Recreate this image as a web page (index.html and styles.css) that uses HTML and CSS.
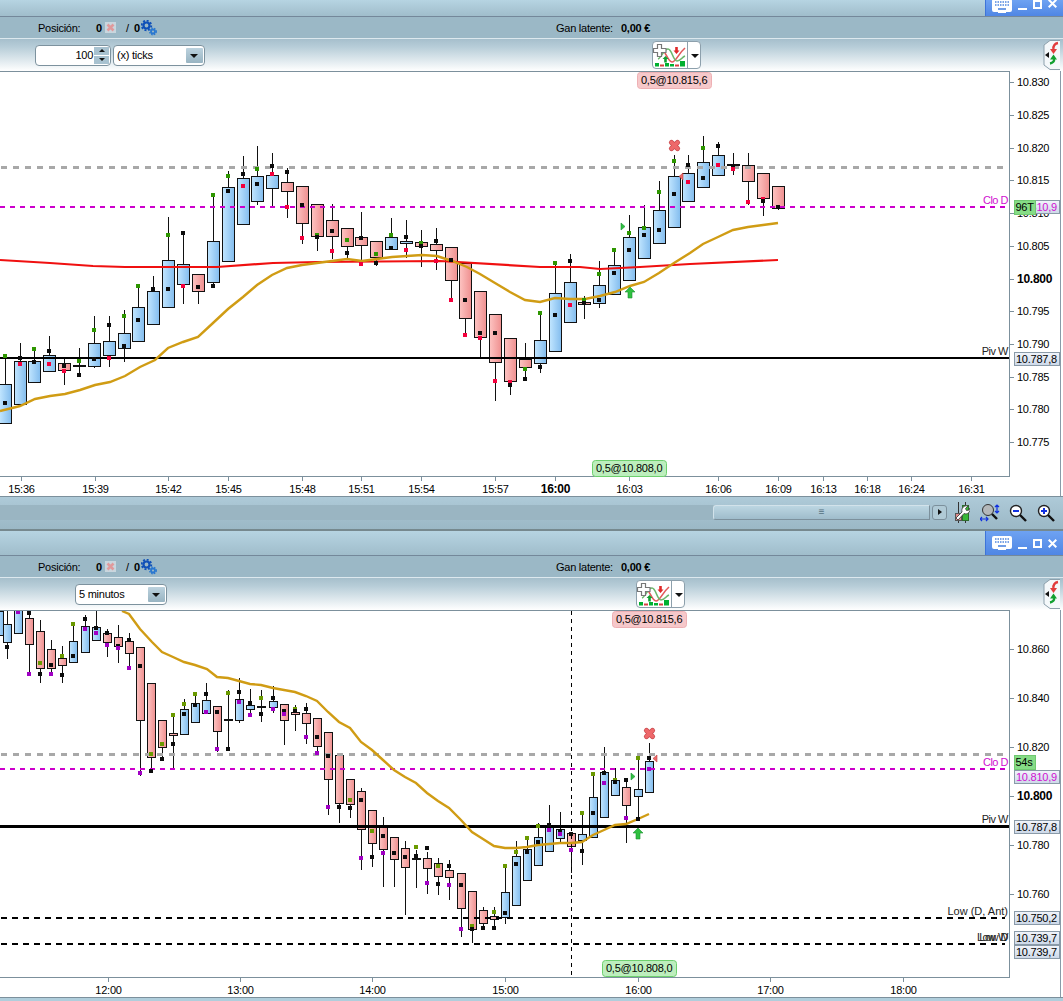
FILE: index.html
```html
<!DOCTYPE html>
<html lang="es">
<head>
<meta charset="utf-8">
<title>Gráficos</title>
<link rel="stylesheet" href="styles.css">
</head>
<body>
<svg class="defs" width="0" height="0" aria-hidden="true">
  <defs>
    <linearGradient id="gb" x1="0" x2="1" y1="0" y2="0"><stop offset="0" stop-color="#c2e6ff"/><stop offset="1" stop-color="#82bcee"/></linearGradient>
    <linearGradient id="gr" x1="0" x2="1" y1="0" y2="0"><stop offset="0" stop-color="#fdc4c2"/><stop offset="1" stop-color="#ef8f8f"/></linearGradient>
    <linearGradient id="gbox" x1="0" x2="0" y1="0" y2="1"><stop offset="0" stop-color="#f2f5fb"/><stop offset="1" stop-color="#ccd8e8"/></linearGradient>
    <symbol id="i-keyboard" viewBox="0 0 20 14">
      <path d="M2 0h16a2 2 0 0 1 2 2v9a2 2 0 0 1-2 2h-4v1H6v-1H2a2 2 0 0 1-2-2V2a2 2 0 0 1 2-2z" fill="#fff"/>
      <path d="M3 3h14M3 6h14" stroke="#4f86e0" stroke-width="1.6" stroke-dasharray="1.5 1"/>
      <path d="M6 10h8" stroke="#4f86e0" stroke-width="1.6"/>
    </symbol>
    <symbol id="i-close" viewBox="0 0 9 9">
      <path d="M.7.7l7.600 7.600M8.300.7L.7 8.300" stroke="#fff" stroke-width="2"/>
    </symbol>
    <symbol id="i-gears" viewBox="0 0 16 16">
      <circle cx="5.5" cy="5.5" r="3" fill="none" stroke="#0f50b8" stroke-width="2.200"/>
      <circle cx="5.5" cy="5.5" r="4.800" fill="none" stroke="#0f50b8" stroke-width="1.800" stroke-dasharray="2 1.700"/>
      <circle cx="12" cy="11.5" r="2" fill="none" stroke="#2a78d0" stroke-width="1.800"/>
      <circle cx="12" cy="11.5" r="3.300" fill="none" stroke="#2a78d0" stroke-width="1.300" stroke-dasharray="1.500 1.200"/>
    </symbol>
    <symbol id="i-cross" viewBox="0 0 11 11">
      <rect width="11" height="11" fill="#c9d6de"/>
      <path d="M2.5 2.5l6 6M8.5 2.5l-6 6" stroke="#e09a9c" stroke-width="2.6"/>
    </symbol>
    <symbol id="i-indic" viewBox="0 0 34 27">
      <path d="M10 9c3 1 5 11 9 11s6-8 13-14" fill="none" stroke="#e25a5a" stroke-width="1.600"/>
      <path d="M5 17c3-1 6-10 10-10s5 12 9 12 5-4 8-5" fill="none" stroke="#6cb86c" stroke-width="1.600"/>
      <path d="M4.500 2.500h4v4H13v4H8.500v4h-4v-4h-4v-4h4z" fill="#fff" stroke="#777" stroke-width="1.200"/>
      <path d="M12.500 14l-3 3h1.700v3.500h2.600V17h1.700z" fill="#10a030"/>
      <path d="M23.500 12l3-3.500h-1.700V5h-2.600v3.500h-1.700z" fill="#e02828"/>
      <path d="M2 21h4v3.500H2zM12 21h4v3.500h-4zM27 19h5v5.500h-5z" fill="#00b030"/>
      <path d="M7 22.500h4v2H7zM22 22.500h4v2h-4z" fill="#d84040"/>
      <path d="M17 22h4v2.500h-4z" fill="#00b030"/>
    </symbol>
    <symbol id="i-side" viewBox="0 0 17 30">
      <path d="M17 .5H7L1 5v20l6 4.500h10" fill="#f4f8fa" stroke="#8da0ac"/>
      <path d="M2 15l4-3v6z" fill="#111"/>
      <path d="M15 3c-3 .5-5 3-4.500 6" fill="none" stroke="#e23c3c" stroke-width="2.400"/>
      <path d="M10.500 14l3.500-5H7z" fill="#e23c3c"/>
      <path d="M11 19c.5 2-1 4-4 4.500" fill="none" stroke="#12a030" stroke-width="2.400"/>
      <path d="M10.500 14.500L7 19.500h7z" fill="#12a030"/>
    </symbol>
  </defs>
</svg>

<section class="pane">
  <div class="title title-first">
    <div class="winbtns">
      <svg class="kb" width="20" height="14"><use href="#i-keyboard"/></svg>
      <span class="w-min"></span><span class="w-max"></span>
      <svg class="w-close" width="9" height="9"><use href="#i-close"/></svg>
    </div>
  </div>
  <div class="status">
    <div class="st-left">
      <span class="st-label">Posición:</span><b class="st-zero">0</b>
      <svg class="st-x" width="11" height="11"><use href="#i-cross"/></svg>
      <span class="st-slash">/</span><b class="st-zero2">0</b>
      <svg width="16" height="16"><use href="#i-gears"/></svg>
    </div>
    <span class="st-gan">Gan latente:</span><b>0,00 €</b>
  </div>
  <div class="toolbar">
    <div class="tb-left tb-left-a">
      <div class="spin">100<span class="spin-btns"><i class="up"></i><i class="down"></i></span></div>
      <div class="sel">(x) ticks<i class="sel-btn"></i></div>
    </div>
    <div class="indic indic-a">
      <svg width="34" height="27"><use href="#i-indic"/></svg><span class="indic-arrow"></span>
    </div>
    <svg class="side" width="17" height="30"><use href="#i-side"/></svg>
  </div>
  <svg id="chart1" class="chart chart-a" viewBox="0 71 1063 425"></svg>
</section>

<div class="scrollrow">
  <div class="track"><div class="thumb">≡</div></div>
  <div class="sbtn"></div>
  <svg class="tool tool-w" width="16" height="21" viewBox="0 0 16 21">
    <path d="M4.500 0v21M11.500 0v21" stroke="#333"/>
    <rect x="1.500" y="11.500" width="6" height="7" fill="#e08a8a" stroke="#555"/>
    <rect x="8.500" y="3.500" width="6" height="15" fill="#38b838" stroke="#2c6c2c"/>
    <path d="M2 16l6-6c-1-4 2-7 6-6l-2.500 2.500 1 2 2.500-.5 1-2c1 4-3 7-6 5.500l-6 6.500z" fill="#fff" stroke="#444" stroke-width=".9"/>
  </svg>
  <svg class="tool tool-m" width="20" height="18" viewBox="0 0 20 18">
    <circle cx="8" cy="6" r="5.500" fill="#b4b8ba" stroke="#333"/>
    <path d="M12 10l5 5" stroke="#111" stroke-width="2.400"/>
    <path d="M17 1v8M15 3l2-2 2 2M15 7l2 2 2-2M0 15h8M2 13l-2 2 2 2M6 13l2 2-2 2" fill="none" stroke="#1030e0" stroke-width="1.200"/>
  </svg>
  <svg class="tool tool-o" width="18" height="18" viewBox="0 0 18 18">
    <circle cx="7" cy="7" r="5.500" fill="#fff" stroke="#222" stroke-width="1.400"/>
    <path d="M11 11l6 6" stroke="#111" stroke-width="2.400"/>
    <path d="M4 7h6" stroke="#1030e0" stroke-width="2"/>
  </svg>
  <svg class="tool tool-i" width="18" height="18" viewBox="0 0 18 18">
    <circle cx="7" cy="7" r="5.500" fill="#fff" stroke="#222" stroke-width="1.400"/>
    <path d="M11 11l6 6" stroke="#111" stroke-width="2.400"/>
    <path d="M4 7h6M7 4v6" stroke="#1030e0" stroke-width="2"/>
  </svg>
</div>

<section class="pane">
  <div class="title title-second">
    <div class="winbtns winbtns-b">
      <svg class="kb" width="20" height="14"><use href="#i-keyboard"/></svg>
      <span class="w-min"></span><span class="w-max"></span>
      <svg class="w-close" width="9" height="9"><use href="#i-close"/></svg>
    </div>
  </div>
  <div class="status">
    <div class="st-left">
      <span class="st-label">Posición:</span><b class="st-zero">0</b>
      <svg class="st-x" width="11" height="11"><use href="#i-cross"/></svg>
      <span class="st-slash">/</span><b class="st-zero2">0</b>
      <svg width="16" height="16"><use href="#i-gears"/></svg>
    </div>
    <span class="st-gan">Gan latente:</span><b>0,00 €</b>
  </div>
  <div class="toolbar">
    <div class="tb-left tb-left-b">
      <div class="sel">5 minutos<i class="sel-btn"></i></div>
    </div>
    <div class="indic indic-b">
      <svg width="34" height="27"><use href="#i-indic"/></svg><span class="indic-arrow"></span>
    </div>
    <svg class="side" width="17" height="30"><use href="#i-side"/></svg>
  </div>
  <svg id="chart2" class="chart chart-b" viewBox="0 610 1063 387"></svg>
</section>
<div class="footer"></div>
<script src="script.js"></script>
</body>
</html>
```
FILE: styles.css
```css
* { box-sizing: border-box; }
html, body { margin: 0; padding: 0; }
body {
  width: 1063px;
  height: 1001px;
  overflow: hidden;
  background: #fff;
  font: 11px "Liberation Sans", Arial, sans-serif;
  letter-spacing: -0.25px;
  color: #000;
}
.defs { position: absolute; }
.pane { display: block; }

.title {
  display: flex;
  justify-content: flex-end;
  border-bottom: 1px solid #74889a;
  background: linear-gradient(#b6d4e2, #a0bdcb);
}
.title-first { height: 17px; }
.title-second { height: 25px; }
.winbtns {
  width: 78px;
  display: flex;
  align-items: center;
  gap: 6px;
  padding-left: 6px;
  background: linear-gradient(#6ea2f2, #4f86e4);
  border-left: 1px solid #3e74d8;
  overflow: hidden;
}
.title-first .winbtns { align-items: flex-start; height: 16px; }
.title-first .kb { margin-top: -1px; }
.winbtns-b { height: 24px; }
.w-min { width: 9px; height: 2px; background: #fff; margin-top: 9px; }
.w-max { width: 9px; height: 9px; border: 2px solid #fff; }
.title-first .w-max { margin-top: 0; }
.title-first .w-min { margin-top: 8px; }
.title-first .w-close { margin-top: -1px; }

.status {
  height: 22px;
  display: flex;
  align-items: center;
  background: #9bb8c6;
  border-bottom: 1px solid #dce8ee;
}
.st-left { width: 556px; display: flex; align-items: center; padding-left: 38px; }
.st-label { width: 58px; }
.st-zero { width: 9px; }
.st-x { margin-right: 10px; }
.st-slash { width: 8px; }
.st-zero2 { width: 7px; }
.st-gan { width: 65px; }

.toolbar {
  height: 32px;
  display: flex;
  align-items: center;
  background: linear-gradient(#a6bfcc, #b7cdd8 25%, #fff);
}
.tb-left { display: flex; gap: 2px; }
.tb-left-a { padding-left: 35px; width: 652px; }
.tb-left-b { padding-left: 75px; width: 636px; }
.spin, .sel {
  height: 21px;
  background: #fff;
  border: 1px solid #7d929e;
  border-radius: 4px;
  display: flex;
  align-items: center;
}
.spin { width: 76px; justify-content: flex-end; padding-right: 1px; }
.spin-btns { display: flex; flex-direction: column; gap: 1px; margin-left: 1px; }
.spin-btns i {
  width: 15px;
  height: 8px;
  background: #a8c2d0;
  position: relative;
  display: block;
}
.spin-btns i::after {
  content: "";
  position: absolute;
  left: 5px;
  top: 2px;
  border: 3px solid transparent;
  border-top: 0;
  border-bottom: 3px solid #111;
}
.spin-btns i.down::after { border-bottom: 0; border-top: 3px solid #111; }
.sel { width: 92px; padding-left: 3px; justify-content: space-between; padding-right: 1px; }
.sel-btn {
  width: 17px;
  height: 15px;
  background: linear-gradient(#bcd2de, #98b4c2);
  border-radius: 1px;
  position: relative;
}
.sel-btn::after {
  content: "";
  position: absolute;
  left: 4px;
  top: 6px;
  border: 4px solid transparent;
  border-bottom: 0;
  border-top: 4px solid #111;
}
.indic {
  width: 49px;
  height: 28px;
  display: flex;
  align-items: center;
  background: #fff;
  border: 1px solid #8da0ac;
  border-radius: 4px;
}
.indic-arrow {
  flex: 1;
  height: 100%;
  border-left: 1px solid #8da0ac;
  position: relative;
}
.indic-arrow::after {
  content: "";
  position: absolute;
  left: 3px;
  top: 12px;
  border: 4px solid transparent;
  border-bottom: 0;
  border-top: 4px solid #111;
}
.side { margin-left: auto; margin-right: 3px; }

.chart { display: block; width: 1063px; }
.chart-a { height: 425px; }
.chart-b { height: 387px; }
.edge { stroke: #8a9aa8; }
.wick, .tick { stroke: #111; shape-rendering: crispEdges; }
.tick { stroke: #7c909c; }
.body { stroke: #111; shape-rendering: crispEdges; }
.body.b { fill: url(#gb); }
.body.r { fill: url(#gr); }
.doji { stroke: #111; stroke-width: 2; shape-rendering: crispEdges; }
.m { shape-rendering: crispEdges; }
.m.g { fill: #2e9600; }
.m.k { fill: #0c0c0c; }
.m.r { fill: #f4003c; }
.chart-b .m.g { fill: #6a9a00; }
.chart-b .m.r { fill: #a000c4; }
.l-grey { stroke: #a8a8a8; stroke-width: 3; stroke-dasharray: 6 6; shape-rendering: crispEdges; }
.l-mag { stroke: #cc00cc; stroke-width: 2; stroke-dasharray: 5 5; shape-rendering: crispEdges; }
.l-black { stroke: #000; stroke-width: 2; shape-rendering: crispEdges; }
.l-thick { stroke-width: 3; }
.l-dash { stroke: #000; stroke-width: 2; stroke-dasharray: 6 5; shape-rendering: crispEdges; }
.l-cross { stroke: #000; stroke-dasharray: 4 4; shape-rendering: crispEdges; }
.l-red { fill: none; stroke: #f01010; stroke-width: 2.200; }
.l-gold { fill: none; stroke: #d09c14; stroke-width: 2.400; }
.ax { font: 11px "Liberation Sans", Arial, sans-serif; letter-spacing: -0.25px; fill: #000; }
.ax.bold { font-weight: bold; font-size: 12px; }
.ax.mag { fill: #d010d0; }
.ax.lbl { fill: #222; text-anchor: end; letter-spacing: -0.5px; }
.ax.lbl.mag { fill: #d010d0; }
.ax.lbl.wide { letter-spacing: 0; }
.ax.mid { text-anchor: middle; }
.box { fill: url(#gbox); stroke: #8a9aa8; shape-rendering: crispEdges; }
.tag-g { fill: #86dc86; stroke: #70c870; shape-rendering: crispEdges; }
.badge-r { fill: #f6c8ca; stroke: #eeb0b4; }
.badge-g { fill: #bdeebd; stroke: #6ed06e; }
.xm-o { fill: none; stroke: #c84a4e; stroke-width: 5.200; stroke-linecap: round; }
.xm { fill: none; stroke: #ee686a; stroke-width: 3.800; stroke-linecap: round; }
.tri-g { fill: #30c040; stroke: #189030; stroke-width: .6; }
.tri-r { fill: #ec6868; stroke: #c04040; stroke-width: .6; }

.scrollrow {
  height: 35px;
  display: flex;
  align-items: center;
  background: linear-gradient(#aecad8, #9bb8c6);
  border-top: 1px solid #7c909c;
  border-bottom: 2px solid #76898f;
  padding-bottom: 3px;
  padding-top: 2px;
}
.track {
  width: 930px;
  height: 15px;
  background: #9ab5c2;
}
.thumb {
  margin-left: 713px;
  width: 217px;
  height: 15px;
  border: 1px solid #d2e2ea;
  border-right-color: #7c909c;
  border-bottom-color: #7c909c;
  border-radius: 3px 0 0 3px;
  background: linear-gradient(#bcd6e2, #9fbccb);
  text-align: center;
  font-size: 10px;
  line-height: 12px;
  color: #54707e;
}
.sbtn {
  width: 15px;
  height: 15px;
  margin-left: 2px;
  border: 1px solid #7c909c;
  border-radius: 3px;
  background: #b0cad6;
  position: relative;
}
.sbtn::after {
  content: "";
  position: absolute;
  left: 5px;
  top: 3px;
  border: 3.500px solid transparent;
  border-right: 0;
  border-left: 4px solid #111;
}
.tool { flex: none; }
.tool-w { margin-left: 7px; }
.tool-m { margin-left: 10px; }
.tool-o { margin-left: 9px; }
.tool-i { margin-left: 10px; }
.footer { height: 4px; border-top: 1px solid #7c909c; background: #b0cedc; }
```
FILE: script.js
```js
var NS = 'http://www.w3.org/2000/svg';
function el(p, t, a, txt) {
  var e = document.createElementNS(NS, t);
  for (var k in a) e.setAttribute(k, a[k]);
  if (txt !== undefined) e.textContent = txt;
  p.appendChild(e);
  return e;
}
var top1 = [
[5,358,424,384,423,'b','g356 k403'],[20,343,405,361,404,'b','k358 r364'],[34,350,382,361,382,'b','g349 k362'],
[49,336,371,355,371,'b','k351 r364'],[64,358,385,363,370,'r','k366 r371'],[79,348,377,366,366,'d','g361 k375'],
[94,316,368,343,366,'b','g330 k359'],[109,316,367,341,355,'b','k325 r358'],[124,310,362,333,348,'b','g316 k346'],
[138,287,341,307,341,'b','g286 k320'],[153,276,324,291,324,'b','k289'],[168,217,307,260,307,'b','g235 k289'],
[183,233,304,264,284,'b','k233 r286'],[198,274,304,274,291,'r','k287'],[213,195,286,241,282,'b','g195 k286'],
[228,171,261,187,261,'b','g176 k191'],[243,156,224,178,224,'b','k174 r186'],[257,146,205,176,201,'b','g169 k184'],
[272,153,207,175,188,'b','k166 r174'],[287,168,218,182,191,'r','k172 r207'],[302,186,244,186,223,'r','k205 r238'],
[317,204,251,204,236,'r','g235 k237'],[332,204,259,220,236,'r','k231 r251'],[347,228,258,228,246,'r','g240 k253'],
[361,212,266,237,245,'r','k238 r264'],[376,241,266,241,257,'r','g254 k263'],[391,218,249,237,249,'b','g235 k248'],
[406,220,258,241,243,'b','k237 r250'],[421,230,267,242,246,'r','g243 k246'],[436,228,270,244,250,'r','k241 r261'],
[451,247,300,247,280,'r','k260 r300'],[465,263,335,263,318,'r','k300 r335'],[480,291,357,291,337,'r','k333 r338'],
[495,314,401,314,362,'r','k333 r381'],[510,338,395,338,381,'r','r382 k385'],[525,343,378,359,367,'r','g369 k379'],
[540,313,373,340,363,'b','g313 k367'],[555,263,351,293,351,'b','g263 k315'],[570,254,322,282,322,'b','k261 r305'],
[584,296,319,302,304,'r','g300 k303'],[599,261,308,285,303,'b','g274 k300'],[614,248,294,265,294,'b','g250 k273'],
[629,215,280,237,280,'b','g233 k250'],[644,205,258,227,258,'b','g228 k235'],[659,181,243,210,243,'b','g192 k230'],
[674,155,227,176,227,'b','g161 k194'],[688,155,201,173,201,'b','k165 r182'],[703,136,187,162,187,'b','g148 k178'],
[718,142,175,155,175,'b','k146 r165'],[733,153,175,165,165,'d','k166 r169'],[748,153,205,165,181,'r','r202'],
[763,173,216,173,198,'r','r199 k201'],[778,186,210,186,208,'r','k207']
];
var bot = [
[-1,611,648,611,635,'b',''],[7,611,659,624,642,'b','k647'],[18,600,633,605,633,'b','r612'],[29,610,674,618,644,'r','k613 r674'],
[40,620,683,631,668,'r','g663 k674'],[51,640,676,649,668,'r','k665 r674'],[62,646,683,658,665,'r','g656 k675'],
[73,624,663,641,662,'b','g624 k656'],[85,615,652,626,652,'b','k619 r629'],[96,611,640,627,640,'b','k628 r633'],
[107,629,657,633,642,'r','k633 r645'],[118,625,663,637,646,'r','k646 r648'],[129,633,668,641,653,'r','k640 r668'],
[140,647,776,647,720,'r','k666 r773'],[151,683,773,683,757,'r','g754 k771'],[162,720,760,720,747,'r','g744 k759'],
[173,715,768,733,735,'r','g715 k744'],[184,699,734,709,734,'b','g704 k714'],[195,694,722,703,722,'b','g694 k705'],
[206,683,713,700,713,'b','k694 r712'],[217,706,752,706,731,'r','k712 r749'],[228,690,750,720,720,'d','g693 k749'],
[239,678,723,699,720,'b','k692 r702'],[250,689,717,705,709,'b','k703 r715'],[261,690,722,707,707,'d','g698 k714'],
[273,686,713,701,707,'b','k698 r709'],[284,704,745,704,720,'r','k711 r714'],[295,705,731,712,714,'r','g709 k711'],
[306,703,744,713,723,'r','k709 r737'],[317,718,753,718,746,'r','k737 r753'],[328,732,815,732,779,'r','k756 r807'],
[339,755,823,755,803,'r','k807'],[350,779,818,779,804,'r','g800 k808'],[361,788,870,791,829,'r','k800 r858'],
[372,810,867,810,843,'r','g831 k857'],[383,817,887,827,849,'r','k836 r853'],[394,837,887,837,859,'r','k853'],
[405,841,915,848,867,'r','k857'],[416,850,888,859,859,'d','g847 k856'],[427,852,894,858,868,'r','k848 r883'],
[438,858,895,863,876,'r','g866 k884'],[449,860,900,870,877,'r','k866 r885'],[461,873,937,873,908,'r','k885 r929'],
[472,891,943,891,929,'r','g926 k929'],[483,907,927,910,923,'r','k928'],[494,907,929,916,919,'r','g912 k928'],
[505,866,924,892,917,'b','g866 k913'],[516,841,905,856,905,'b','g852 k864'],[527,838,880,849,880,'b','g838 k852'],
[538,823,865,837,865,'b','g826 k842'],[549,805,851,827,851,'b','k825 r830'],[560,812,842,829,838,'b','k831 r834'],
[571,833,873,833,846,'r','k834 r850'],[582,813,865,834,840,'b','g813 k851'],[593,773,837,797,837,'b','g774 k813'],
[604,747,817,772,817,'b','k773 r783'],[615,768,795,780,795,'b','g780 k782'],[626,780,843,787,805,'r','k780 r818'],
[638,758,819,789,796,'b','g758 k819'],[649,743,792,761,792,'b','k758 r769']
];
var red1 = '0,260 50,263 93,266 125,267 217,267 273,263 317,262 440,261 540,267 580,267 600,269 640,267 690,264 778,260';
var gold1 = '0,411 20,406 35,399 50,396 65,394 80,390 95,385 110,382 125,376 140,367 155,360 168,348 183,342 198,337 213,323 228,309 243,297 257,285 272,275 287,268 302,265 317,263 347,259 362,261 377,259 392,257 407,256 422,255 437,256 452,261 467,267 480,274 495,283 510,292 525,300 540,302 555,298 570,299 585,299 600,296 615,292 630,286 644,282 659,273 674,263 690,253 703,244 718,237 733,230 748,227 763,225 778,223';
var gold2 = '122,611 129,614 140,629 152,642 162,652 173,657 184,662 195,665 207,669 217,677 228,678 239,681 250,684 261,685 273,688 284,690 295,692 306,696 317,701 328,712 339,722 350,728 361,742 372,750 383,760 394,770 405,777 416,783 427,793 438,801 449,808 461,820 472,832 483,839 494,846 505,848 516,848 527,847 538,845 549,844 560,843 571,843 582,842 593,835 604,830 615,825 626,824 638,819 649,814';

function candles(g, list, half) {
  list.forEach(function (c) {
    var x = c[0] + .5;
    el(g, 'line', {'class': 'wick', x1: x, x2: x, y1: c[1], y2: c[2]});
    if (c[5] === 'd') {
      el(g, 'line', {'class': 'doji', x1: x - half - .5, x2: x + half + .5, y1: c[3], y2: c[3]});
    } else {
      el(g, 'rect', {'class': 'body ' + c[5], x: x - half, y: c[3] + .5, width: half * 2, height: Math.max(c[4] - c[3], 1)});
    }
  });
}
function markers(g, list) {
  list.forEach(function (c) {
    c[6].split(' ').forEach(function (m) {
      if (!m) return;
      el(g, 'rect', {'class': 'm ' + m[0], x: c[0] - 2, y: +m.slice(1) - 2, width: 4, height: 4});
    });
  });
}
function hline(s, cls, y, x2) {
  el(s, 'line', {'class': cls, x1: x2 === 1009 ? 0 : 1, x2: x2, y1: y, y2: y});
}
function xMark(s, x, y) {
  var d = 'M' + (x - 3) + ' ' + (y - 3) + 'l6 6m0-6l-6 6';
  el(s, 'path', {'class': 'xm-o', d: d});
  el(s, 'path', {'class': 'xm', d: d});
}
function arrow(s, x, y) {
  el(s, 'path', {'class': 'tri-g', d: 'M' + x + ' ' + y + 'l5 5h-3v6h-4v-6h-3z'});
}
function triR(s, x, y) { el(s, 'path', {'class': 'tri-g', d: 'M' + x + ' ' + y + 'l4 3.500-4 3.500z'}); }
function triL(s, x, y) { el(s, 'path', {'class': 'tri-r', d: 'M' + x + ' ' + y + 'l-4 3.500 4 3.500z'}); }
function badge(s, cls, x, y, w, h, t) {
  el(s, 'rect', {'class': cls, x: x + .5, y: y + .5, width: w, height: h, rx: 3});
  el(s, 'text', {'class': 'ax', x: x + 4, y: y + 12}, t);
}
function valBox(s, y, t, mag) {
  el(s, 'rect', {'class': 'box', x: 1014.5, y: y + .5, width: 45, height: 13});
  el(s, 'text', {'class': 'ax' + (mag ? ' mag' : ''), x: 1016, y: y + 11}, t);
}
function tag(s, y, t) {
  el(s, 'rect', {'class': 'tag-g', x: 1014.5, y: y + .5, width: 21, height: 14});
  el(s, 'text', {'class': 'ax', x: 1015.5, y: y + 11}, t);
}
function lbl(s, y, t, extra) {
  el(s, 'text', {'class': 'ax lbl' + (extra ? ' ' + extra : ''), x: 1008, y: y}, t);
}
function frame(s, y1, y2) {
  el(s, 'rect', {x: 0, y: y1, width: 1060, height: y2 - y1 + 30, fill: '#fff'});
  el(s, 'path', {'class': 'tick', fill: 'none', d: 'M0 ' + (y1 + .5) + 'H1009.500V' + (y2 + .5) + 'H0'});
  el(s, 'line', {'class': 'edge', x1: 1060.5, x2: 1060.5, y1: y1, y2: y2 + 30});
}
function yAxis(s, list) {
  list.forEach(function (a) {
    el(s, 'line', {'class': 'tick', x1: 1010, x2: 1014, y1: a[0] + .5, y2: a[0] + .5});
    el(s, 'text', {'class': 'ax' + (a[2] ? ' bold' : ''), x: 1017, y: a[0] + 4}, a[1]);
  });
}
function xAxis(s, list, y) {
  list.forEach(function (a) {
    el(s, 'line', {'class': 'tick', x1: a[0] + .5, x2: a[0] + .5, y1: y, y2: y + 4});
    el(s, 'text', {'class': 'ax mid' + (a[2] ? ' bold' : ''), x: a[0] + .5, y: y + 16}, a[1]);
  });
}

/* chart 1 */
(function () {
  var s = document.getElementById('chart1');
  frame(s, 71, 476);
  candles(s, top1, 6);
  hline(s, 'l-grey', 167.5, 1005);
  hline(s, 'l-mag', 207, 1009);
  hline(s, 'l-black', 358, 1009);
  el(s, 'polyline', {'class': 'l-red', points: red1});
  el(s, 'polyline', {'class': 'l-gold', points: gold1});
  markers(s, top1);
  xMark(s, 674.5, 145.5); triR(s, 621, 223); triL(s, 683, 173); arrow(s, 630, 287);
  yAxis(s, [[82,'10.830'],[115,'10.825'],[148,'10.820'],[180,'10.815'],[213,'10.810'],[246,'10.805'],[279,'10.800',1],[311,'10.795'],[344,'10.790'],[377,'10.785'],[409,'10.780'],[442,'10.775']]);
  xAxis(s, [[21,'15:36'],[95,'15:39'],[168,'15:42'],[228,'15:45'],[302,'15:48'],[361,'15:51'],[421,'15:54'],[495,'15:57'],[555,'16:00',1],[629,'16:03'],[718,'16:06'],[778,'16:09'],[823,'16:13'],[867,'16:18'],[911,'16:24'],[971,'16:31']], 477);
  badge(s, 'badge-r', 637, 72, 74, 16, '0,5@10.815,6');
  badge(s, 'badge-g', 592, 460, 74, 16, '0,5@10.808,0');
  lbl(s, 204, 'Clo D', 'mag'); lbl(s, 355, 'Piv W');
  valBox(s, 200, '10.810,9', 1);
  tag(s, 200, '96T');
  valBox(s, 352, '10.787,8');
})();

/* chart 2 */
(function () {
  var s = document.getElementById('chart2');
  var id = 'clip2';
  var cp = el(s, 'clipPath', {id: id});
  el(cp, 'rect', {x: 0, y: 611, width: 1009, height: 366});
  frame(s, 610, 977);
  var g = el(s, 'g', {'clip-path': 'url(#' + id + ')'});
  candles(g, bot, 4);
  el(g, 'line', {'class': 'l-cross', x1: 571.5, x2: 571.5, y1: 611, y2: 977});
  hline(g, 'l-grey', 754.5, 1005);
  hline(g, 'l-mag', 769, 1009);
  hline(g, 'l-black l-thick', 826.5, 1009);
  hline(g, 'l-dash', 918, 1005);
  hline(g, 'l-dash', 944, 1005);
  el(g, 'polyline', {'class': 'l-gold', points: gold2});
  markers(g, bot);
  xMark(s, 649.5, 733.5); triR(s, 631, 773); triL(s, 657, 755); arrow(s, 638, 828);
  yAxis(s, [[649,'10.860'],[698,'10.840'],[747,'10.820'],[796,'10.800',1],[845,'10.780'],[894,'10.760']]);
  xAxis(s, [[108,'12:00'],[240,'13:00'],[372,'14:00'],[505,'15:00'],[638,'16:00'],[770,'17:00'],[903,'18:00']], 978);
  badge(s, 'badge-r', 612, 611, 74, 16, '0,5@10.815,6');
  badge(s, 'badge-g', 602, 960, 74, 16, '0,5@10.808,0');
  lbl(s, 766, 'Clo D', 'mag'); lbl(s, 823, 'Piv W'); lbl(s, 915, 'Low (D, Ant)', 'wide'); lbl(s, 941, 'Low W'); lbl(s, 941, 'Low D');
  tag(s, 755, '54s');
  valBox(s, 770, '10.810,9', 1);
  valBox(s, 820, '10.787,8');
  valBox(s, 911, '10.750,2');
  valBox(s, 931, '10.739,7');
  valBox(s, 945, '10.739,7');
})();
```
